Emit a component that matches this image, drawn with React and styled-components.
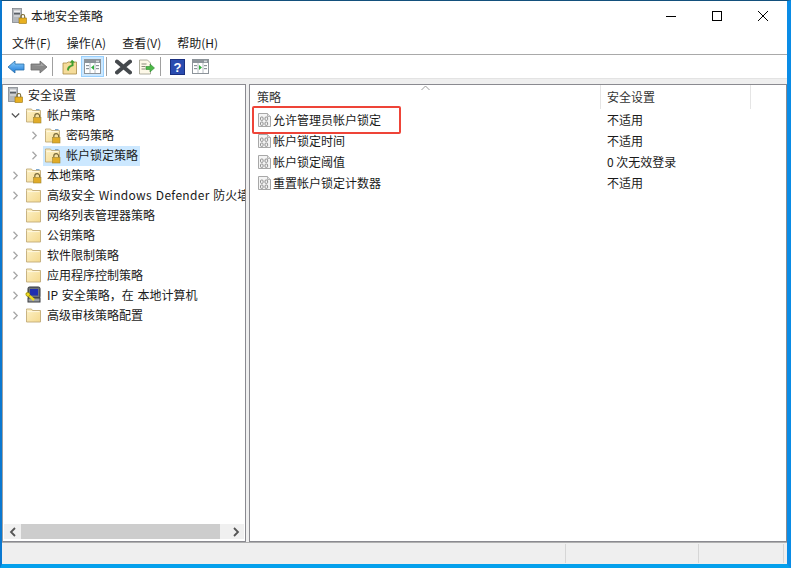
import React from 'react';
import styled, { createGlobalStyle } from 'styled-components';

const GlobalStyle = createGlobalStyle`
	html, body { margin: 0; padding: 0; height: 100%; background: #fff; overflow: hidden; }
	#root { height: 100%; }
`;

const Win = styled.div`
	width: 791px;
	height: 568px;
	box-sizing: border-box;
	display: flex;
	flex-direction: column;
	background: #fff;
	border-left: 2px solid #0a78d0;
	border-right: 4px solid #0a8ce6;
	border-top: 1px solid #13507c;
	border-bottom: 4px solid #04a0ec;
	font-family: "Noto Sans CJK SC", "Microsoft YaHei", sans-serif;
	font-size: 12px;
	color: #1a1a1a;
`;

const TitleBar = styled.div`
	height: 29px;
	display: flex;
	align-items: center;
	padding: 0 1px 0 9px;
	flex: none;
`;

const TitleText = styled.span`
	flex: 1;
	margin-left: 4px;
`;

const WinBtn = styled.div`
	width: 46px;
	height: 29px;
	display: flex;
	align-items: center;
	justify-content: center;
`;

const MenuBar = styled.div`
	height: 24px;
	display: flex;
	align-items: center;
	padding-left: 10px;
	gap: 16px;
	border-bottom: 1px solid #a9a9a9;
	flex: none;
`;

const ToolBar = styled.div`
	height: 23px;
	display: flex;
	align-items: center;
	padding-left: 2px;
	flex: none;
`;

const ToolBtn = styled.div`
	width: 23px;
	height: 21px;
	box-sizing: border-box;
	display: flex;
	align-items: center;
	justify-content: center;
	background: ${p => (p.$active ? '#cce8ff' : 'transparent')};
	border: 1px solid ${p => (p.$active ? '#99d1ff' : 'transparent')};
`;

const ToolSep = styled.div`
	width: 1px;
	height: 19px;
	background: #a0a0a0;
	margin: 0 5px 0 2px;
`;

const Panes = styled.div`
	flex: 1;
	min-height: 0;
	display: flex;
	gap: 3px;
	background: #efefef;
	padding-top: 5px;
	border-top: 1px solid #e3e3e3;
`;

const LeftPane = styled.div`
	width: 244px;
	box-sizing: border-box;
	border: 1px solid #8a8a90;
	border-left-color: #a0a0a0;
	background: #fff;
	display: flex;
	flex-direction: column;
	overflow: hidden;
`;

const Tree = styled.div`
	flex: 1;
	min-height: 0;
	overflow: hidden;
`;

const TreeRow = styled.div`
	height: 20px;
	display: flex;
	align-items: center;
	padding-left: ${p => (p.$root ? 2 : p.$level * 19 + 5)}px;
	white-space: nowrap;
`;

const Arrow = styled.div`
	width: 14px;
	height: 20px;
	flex: none;
	display: flex;
	align-items: center;
	justify-content: center;
	margin-right: 2px;
`;

const NodeIcon = styled.div`
	width: 20px;
	height: 20px;
	flex: none;
	display: flex;
	align-items: center;
	justify-content: center;
	margin-right: 3px;
`;

const NodeLabel = styled.span`
	align-self: flex-start;
	height: 20px;
	line-height: ${p => (p.$selected ? 18 : 20)}px;
	padding-right: 2px;
	word-spacing: 1px;
`;

const Latin = styled.span`
	letter-spacing: 0.3px;
`;

const SelectBlock = styled.div`
	display: flex;
	align-items: center;
	height: 20px;
	margin-top: ${p => (p.$selected ? 1 : 0)}px;
	background: ${p => (p.$selected ? '#cce8ff' : 'transparent')};
`;

const HScroll = styled.div`
	height: 15px;
	flex: none;
	margin: 0 1px 2px 1px;
	background: #f0f0f0;
	display: flex;
	align-items: center;
`;

const ScrollArrow = styled.div`
	width: 17px;
	height: 15px;
	flex: none;
	display: flex;
	align-items: center;
	justify-content: center;
`;

const ScrollThumb = styled.div`
	width: 199px;
	height: 15px;
	background: #cdcdcd;
`;

const ScrollGap = styled.div`
	flex: 1;
`;

const RightPane = styled.div`
	flex: 1;
	box-sizing: border-box;
	border: 1px solid #8a8a90;
	background: #fff;
	position: relative;
`;

const Head = styled.div`
	height: 24px;
	display: flex;
	position: relative;
`;

const HeadCell = styled.div`
	width: ${p => p.$w}px;
	flex: none;
	box-sizing: border-box;
	padding: 3px 0 0 ${p => p.$pad}px;
	line-height: 18px;
	color: #333;
	border-right: 1px solid #e5e5e5;
`;

const SortMark = styled.div`
	position: absolute;
	left: 171px;
	top: 0;
	height: 8px;
	display: flex;
`;

const ListRow = styled.div`
	height: 21px;
	display: flex;
	align-items: center;
`;

const NameCell = styled.div`
	width: 351px;
	flex: none;
	display: flex;
	align-items: center;
	padding-left: 7px;
	box-sizing: border-box;
	gap: 1px;
`;

const ValueCell = styled.div`
	padding-left: 6px;
`;

const Callout = styled.div`
	position: absolute;
	left: 2px;
	top: 21px;
	width: 149px;
	height: 28px;
	box-sizing: border-box;
	border: 2px solid #ee4438;
	border-radius: 2px;
`;

const StatusBar = styled.div`
	height: 21px;
	flex: none;
	background: #efefef;
	border-top: 1px solid #b0b0b0;
	display: flex;
	justify-content: flex-end;
`;

const StatusCell = styled.div`
	width: ${p => p.$w}px;
	margin: 1px 0;
	box-sizing: border-box;
	border-left: 1px solid #d6d6d6;
`;

const TitleIcon = () => (
	<svg width="16" height="16" viewBox="0 0 16 16">
		<rect x="1.5" y="0.5" width="9" height="14" fill="#b4b8bd" stroke="#777c82" strokeWidth="0.7" />
		<rect x="3" y="2.5" width="6" height="1.4" fill="#f2f2f2" />
		<rect x="3" y="5" width="6" height="1.4" fill="#5b6066" />
		<rect x="3" y="7.5" width="6" height="1" fill="#e6e6e6" />
		<rect x="8" y="10" width="7.5" height="5.5" fill="#e8b020" stroke="#9a7410" strokeWidth="0.6" />
		<path d="M9.9 10V8.4a1.9 1.9 0 0 1 3.8 0V10" fill="none" stroke="#7a6a30" strokeWidth="1.1" />
	</svg>
);

const Folder = ({ locked }) => (
	<svg width="18" height="17" viewBox="0 0 18 17">
		<defs>
			<linearGradient id="fld" x1="0" y1="0" x2="1" y2="1">
				<stop offset="0" stopColor="#fdf1c6" />
				<stop offset="1" stopColor="#f4d98e" />
			</linearGradient>
		</defs>
		<path d="M1.5 3.5V2h5l1 1.5H15.5V15h-14z" fill="url(#fld)" stroke="#c2ac78" strokeWidth="0.9" />
		<path d="M2.5 4.6h12" stroke="#fff8e0" />
		{locked && <rect x="11" y="2" width="3.5" height="1.2" fill="#7fa8cc" />}
		{locked && (
			<>
				<path d="M9.8 10.5V9a2.4 2.4 0 0 1 4.8 0v1.5" fill="none" stroke="#77693a" strokeWidth="1.2" />
				<rect x="8.5" y="10.5" width="7.5" height="5.5" fill="#e0ab28" stroke="#a08530" strokeWidth="0.6" />
			</>
		)}
	</svg>
);

const IpIcon = () => (
	<svg width="18" height="18" viewBox="0 0 18 18">
		<rect x="3" y="1" width="12" height="11" rx="1.5" fill="#6d7278" stroke="#2f3236" />
		<rect x="5" y="3" width="8" height="6.5" fill="#1f2fb0" />
		<rect x="3" y="12" width="12" height="4" fill="#9a9ea3" stroke="#3a3d41" />
		<path d="M1 7l8 7" stroke="#f0dc1e" strokeWidth="2.4" />
		<circle cx="3" cy="8.5" r="2" fill="#f0dc1e" stroke="#665d10" strokeWidth="0.5" />
	</svg>
);

const PolicyIcon = () => (
	<svg width="15" height="16" viewBox="0 0 15 16">
		<path d="M1.5 1.5h9l3 3v10h-12z" fill="#f4f4f4" stroke="#a8a8a8" />
		<path d="M10.5 1.5v3h3" fill="#ddd" stroke="#a8a8a8" strokeWidth="0.8" />
		<rect x="3.5" y="5" width="2.6" height="3.4" rx="1" fill="none" stroke="#858585" strokeWidth="0.9" />
		<rect x="8" y="5" width="2.6" height="3.4" rx="1" fill="none" stroke="#858585" strokeWidth="0.9" />
		<rect x="3.5" y="10" width="2.6" height="3.4" rx="1" fill="none" stroke="#858585" strokeWidth="0.9" />
		<rect x="8" y="10" width="2.6" height="3.4" rx="1" fill="none" stroke="#858585" strokeWidth="0.9" />
	</svg>
);

const Chevron = ({ open }) => (
	<svg width="9" height="9" viewBox="0 0 9 9">
		{open ? (
			<path d="M0.8 2.5L4.5 6.2L8.2 2.5" fill="none" stroke="#555" strokeWidth="1.3" />
		) : (
			<path d="M2.5 0.8L6.2 4.5L2.5 8.2" fill="none" stroke="#a6a6a6" strokeWidth="1.3" />
		)}
	</svg>
);

const BackIcon = () => (
	<svg width="18" height="14" viewBox="0 0 18 14">
		<defs>
			<linearGradient id="bk" x1="0" y1="0" x2="0" y2="1">
				<stop offset="0" stopColor="#8fd0fb" />
				<stop offset="1" stopColor="#1a78d8" />
			</linearGradient>
		</defs>
		<path d="M1 7L8 1v3h9v6H8v3z" fill="url(#bk)" stroke="#2a6ea8" strokeWidth="0.8" />
	</svg>
);

const ForwardIcon = () => (
	<svg width="18" height="14" viewBox="0 0 18 14">
		<path d="M17 7L10 1v3H1v6h9v3z" fill="#8a8a8a" stroke="#6d6d6d" strokeWidth="0.8" />
		<path d="M2 5h9V3l3 3z" fill="#a9a9a9" />
	</svg>
);

const UpIcon = () => (
	<svg width="16" height="16" viewBox="0 0 16 16">
		<path d="M1 4h4l1-1h8.5v12H1z" fill="#f5dc9a" stroke="#a88a45" strokeWidth="0.8" />
		<path d="M5 11c0-3 2-4.5 4.5-5V3.5L7.7 4 10 0.8l3 2.6-1.5.2V7C9 7.5 7 9 6.5 12z" fill="#3f9e2f" />
	</svg>
);

const PaneIcon = ({ right }) => (
	<svg width="17" height="15" viewBox="0 0 17 15">
		<rect x="0.5" y="0.5" width="16" height="14" fill="#fff" stroke="#8d949a" />
		<rect x="1" y="1" width="15" height="3" fill="#8d949a" />
		<rect x="12" y="1.6" width="3" height="1.6" fill="#d4d8dc" />
		<path d="M6 4v10M11 4v10" stroke="#b6bcc2" />
		<rect x="2" y="6" width="3" height="1.2" fill="#8d949a" />
		<rect x="2" y="9" width="3" height="1.2" fill="#8d949a" />
		<rect x="12" y="6" width="3" height="1.2" fill="#8d949a" />
		<rect x="12" y="9" width="3" height="1.2" fill="#8d949a" />
		{right ? <path d="M7 6l3 2.5L7 11z" fill="#2fae3c" /> : <path d="M10 6L7 8.5l3 2.5z" fill="#2fae3c" />}
	</svg>
);

const DeleteIcon = () => (
	<svg width="17" height="16" viewBox="0 0 17 16">
		<path d="M2 2.5l13 11M15 2.5l-13 11" stroke="#45494d" strokeWidth="4" strokeLinecap="round" />
	</svg>
);

const ExportIcon = () => (
	<svg width="17" height="16" viewBox="0 0 17 16">
		<path d="M1.5 1h8l3 3v11h-11z" fill="#fdf8e8" stroke="#9a9a8a" strokeWidth="0.8" />
		<path d="M3.5 5h5M3.5 7.5h4M3.5 10h4" stroke="#8a8a7a" />
		<path d="M8 7.5h4V5l4.5 4-4.5 4v-2.5H8z" fill="#4cb848" stroke="#2f8a30" strokeWidth="0.6" />
	</svg>
);

const HelpIcon = () => (
	<svg width="15" height="16" viewBox="0 0 15 16">
		<rect x="0.5" y="0.5" width="14" height="15" fill="#2a4cb0" stroke="#1a2f80" />
		<text x="7.5" y="13" textAnchor="middle" fontSize="13" fontWeight="700" fontFamily="Liberation Sans" fill="#fff">?</text>
	</svg>
);

const treeItems = [
	{ level: 0, label: '安全设置', root: true },
	{ level: 0, label: '帐户策略', locked: true, open: true },
	{ level: 1, label: '密码策略', locked: true, arrow: true },
	{ level: 1, label: '帐户锁定策略', locked: true, arrow: true, selected: true },
	{ level: 0, label: '本地策略', locked: true, arrow: true },
	{ level: 0, label: <>高级安全 <Latin>Windows Defender</Latin> 防火墙</>, arrow: true },
	{ level: 0, label: '网络列表管理器策略' },
	{ level: 0, label: '公钥策略', arrow: true },
	{ level: 0, label: '软件限制策略', arrow: true },
	{ level: 0, label: '应用程序控制策略', arrow: true },
	{ level: 0, label: 'IP 安全策略，在 本地计算机', arrow: true, ip: true },
	{ level: 0, label: '高级审核策略配置', arrow: true },
];

const policies = [
	['允许管理员帐户锁定', '不适用'],
	['帐户锁定时间', '不适用'],
	['帐户锁定阈值', '0 次无效登录'],
	['重置帐户锁定计数器', '不适用'],
];

const App = () => {
	return (
		<Win>
			<GlobalStyle />
			<TitleBar>
				<TitleIcon />
				<TitleText>本地安全策略</TitleText>
				<WinBtn>
					<svg width="10" height="10" viewBox="0 0 10 10"><path d="M0 5.5h10" stroke="#000" /></svg>
				</WinBtn>
				<WinBtn>
					<svg width="10" height="10" viewBox="0 0 10 10"><rect x="0.5" y="0.5" width="9" height="9" fill="none" stroke="#000" /></svg>
				</WinBtn>
				<WinBtn>
					<svg width="10" height="10" viewBox="0 0 10 10"><path d="M0 0l10 10M10 0L0 10" stroke="#000" /></svg>
				</WinBtn>
			</TitleBar>
			<MenuBar>
				<span>文件(F)</span>
				<span>操作(A)</span>
				<span>查看(V)</span>
				<span>帮助(H)</span>
			</MenuBar>
			<ToolBar>
				<ToolBtn><BackIcon /></ToolBtn>
				<ToolBtn><ForwardIcon /></ToolBtn>
				<ToolSep />
				<ToolBtn><UpIcon /></ToolBtn>
				<ToolBtn $active><PaneIcon /></ToolBtn>
				<ToolSep />
				<ToolBtn><DeleteIcon /></ToolBtn>
				<ToolBtn><ExportIcon /></ToolBtn>
				<ToolSep />
				<ToolBtn><HelpIcon /></ToolBtn>
				<ToolBtn><PaneIcon right /></ToolBtn>
			</ToolBar>
			<Panes>
				<LeftPane>
					<Tree>
						{treeItems.map((item, i) => (
							<TreeRow key={i} $level={item.level} $root={item.root}>
								{!item.root && (
									<Arrow>{(item.arrow || item.open) && <Chevron open={item.open} />}</Arrow>
								)}
								<SelectBlock $selected={item.selected}>
									<NodeIcon>
										{item.root ? <TitleIcon /> : item.ip ? <IpIcon /> : <Folder locked={item.locked} />}
									</NodeIcon>
									<NodeLabel $selected={item.selected}>{item.label}</NodeLabel>
								</SelectBlock>
							</TreeRow>
						))}
					</Tree>
					<HScroll>
						<ScrollArrow>
							<svg width="8" height="10" viewBox="0 0 8 10"><path d="M6 1L2 5l4 4" fill="none" stroke="#555" strokeWidth="1.8" /></svg>
						</ScrollArrow>
						<ScrollThumb />
						<ScrollGap />
						<ScrollArrow>
							<svg width="8" height="10" viewBox="0 0 8 10"><path d="M2 1l4 4-4 4" fill="none" stroke="#555" strokeWidth="1.8" /></svg>
						</ScrollArrow>
					</HScroll>
				</LeftPane>
				<RightPane>
					<Head>
						<HeadCell $w={351} $pad={7}>策略</HeadCell>
						<HeadCell $w={150} $pad={6}>安全设置</HeadCell>
						<SortMark>
							<svg width="9" height="6" viewBox="0 0 9 6"><path d="M0.5 5L4.5 1l4 4" fill="none" stroke="#9a9a9a" /></svg>
						</SortMark>
					</Head>
					{policies.map(([name, value]) => (
						<ListRow key={name}>
							<NameCell>
								<PolicyIcon />
								<span>{name}</span>
							</NameCell>
							<ValueCell>{value}</ValueCell>
						</ListRow>
					))}
					<Callout />
				</RightPane>
			</Panes>
			<StatusBar>
				<StatusCell $w={133} />
				<StatusCell $w={85} />
				<StatusCell $w={4} />
			</StatusBar>
		</Win>
	);
};

export default App;
